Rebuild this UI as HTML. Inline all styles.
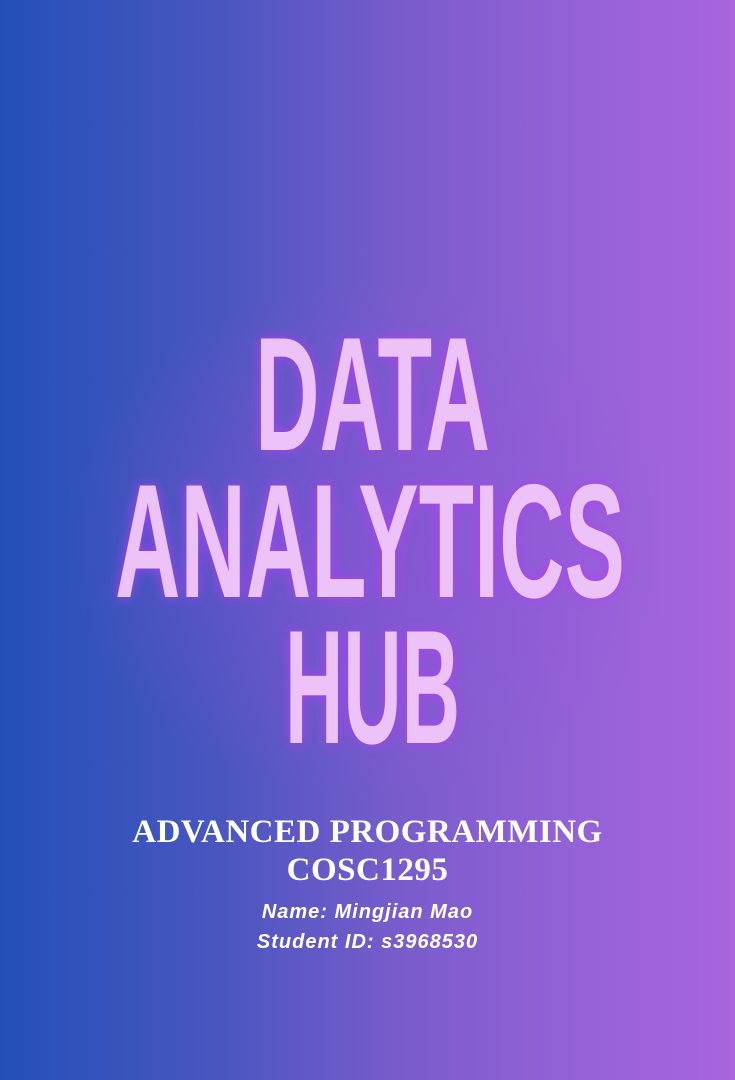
<!DOCTYPE html>
<html><head><meta charset="utf-8"><style>
html,body{margin:0;padding:0}
body{width:735px;height:1080px;overflow:hidden;background:linear-gradient(90deg,#2350b8 0%,#4a56c0 30%,#7a5ccc 55%,#9662d8 80%,#a865dc 100%);position:relative}
.glow{position:absolute;left:60px;top:280px;width:620px;height:520px;background:radial-gradient(ellipse at center,rgba(150,80,220,0.45) 0%,rgba(150,80,220,0.15) 50%,rgba(150,80,220,0) 70%)}
svg{position:absolute;left:0;top:0}
.t{font-family:"Liberation Sans",sans-serif;font-weight:bold;font-size:162px;fill:#ecc2f8}
.s{position:absolute;left:0;width:735px;text-align:center;color:#fff}
</style></head><body>
<div class="glow"></div>
<svg width="735" height="1080">
<defs><filter id="g" x="-20%" y="-20%" width="140%" height="140%"><feGaussianBlur stdDeviation="6" result="b"/><feFlood flood-color="#b040f0" flood-opacity="0.9"/><feComposite in2="b" operator="in" result="c"/><feMerge><feMergeNode in="c"/><feMergeNode in="SourceGraphic"/></feMerge></filter></defs>
<g filter="url(#g)">
<text class="t" x="255" y="450" textLength="235" lengthAdjust="spacingAndGlyphs">DATA</text>
<text class="t" x="115" y="597" textLength="510" lengthAdjust="spacingAndGlyphs">ANALYTICS</text>
<text class="t" x="285" y="743" textLength="175" lengthAdjust="spacingAndGlyphs">HUB</text>
</g>
</svg>
<div class="s" style="top:813px;font-family:'Liberation Serif',serif;font-weight:bold;font-size:33px;line-height:38px;letter-spacing:0.5px">ADVANCED PROGRAMMING<br>COSC1295</div>
<div class="s" style="top:897px;font-family:'Liberation Sans',sans-serif;font-weight:bold;font-style:italic;font-size:20px;line-height:30px;letter-spacing:1px">Name: Mingjian Mao<br>Student ID: s3968530</div>
</body></html>
